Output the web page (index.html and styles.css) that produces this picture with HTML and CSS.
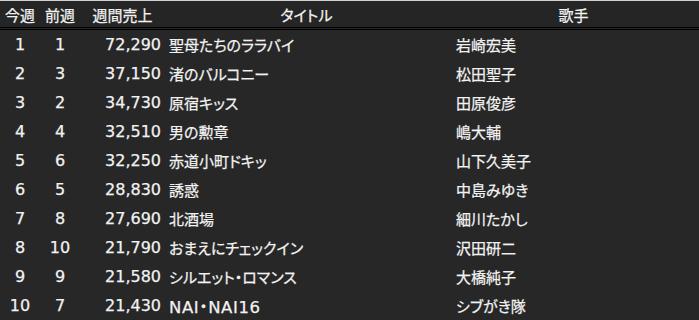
FILE: index.html
```html
<!DOCTYPE html>
<html lang="ja">
<head>
<meta charset="utf-8">
<link rel="stylesheet" href="styles.css">
</head>
<body>
<table class="chart">
  <colgroup>
    <col class="c-now"><col class="c-prev"><col class="c-sales"><col class="c-title"><col class="c-artist">
  </colgroup>
  <thead>
    <tr><th>今週</th><th>前週</th><th>週間売上</th><th>タイトル</th><th>歌手</th></tr>
  </thead>
  <tbody>
    <tr><td class="num">1</td><td class="num">1</td><td class="sales">72,290</td><td class="txt">聖母たちのララバイ</td><td class="txt artist">岩崎宏美</td></tr>
    <tr><td class="num">2</td><td class="num">3</td><td class="sales">37,150</td><td class="txt">渚のバルコニー</td><td class="txt artist">松田聖子</td></tr>
    <tr><td class="num">3</td><td class="num">2</td><td class="sales">34,730</td><td class="txt">原宿キッス</td><td class="txt artist">田原俊彦</td></tr>
    <tr><td class="num">4</td><td class="num">4</td><td class="sales">32,510</td><td class="txt">男の勲章</td><td class="txt artist">嶋大輔</td></tr>
    <tr><td class="num">5</td><td class="num">6</td><td class="sales">32,250</td><td class="txt">赤道小町ドキッ</td><td class="txt artist">山下久美子</td></tr>
    <tr><td class="num">6</td><td class="num">5</td><td class="sales">28,830</td><td class="txt">誘惑</td><td class="txt artist">中島みゆき</td></tr>
    <tr><td class="num">7</td><td class="num">8</td><td class="sales">27,690</td><td class="txt">北酒場</td><td class="txt artist">細川たかし</td></tr>
    <tr><td class="num">8</td><td class="num">10</td><td class="sales">21,790</td><td class="txt">おまえにチェックイン</td><td class="txt artist">沢田研二</td></tr>
    <tr><td class="num">9</td><td class="num">9</td><td class="sales">21,580</td><td class="txt">シルエット・ロマンス</td><td class="txt artist">大橋純子</td></tr>
    <tr><td class="num">10</td><td class="num">7</td><td class="sales">21,430</td><td class="txt"><span class="latin">NAI・NAI16</span></td><td class="txt artist">シブがき隊</td></tr>
  </tbody>
</table>
</body>
</html>
```

FILE: styles.css
```css
html, body {
  margin: 0;
  padding: 0;
  background: #272727;
}
body {
  border-top: 1px solid #d2d2d2;
  color: #f2f2f2;
  font-family: "DejaVu Sans", "Noto Sans CJK JP", sans-serif;
  font-size: 15px;
  font-feature-settings: "palt" 1;
  -webkit-text-stroke: 0.25px #f2f2f2;
}
.chart {
  width: 699px;
  border-collapse: collapse;
  table-layout: fixed;
}
.c-now { width: 40px; }
.c-prev { width: 40px; }
.c-sales { width: 85px; }
.c-title { width: 283px; }
.c-artist { width: 251px; }

.chart th {
  height: 26px;
  padding: 0;
  font-weight: normal;
  text-align: center;
  border-bottom: 3px double #000;
  background: #252525;
  white-space: nowrap;
}
.chart td {
  height: 29px;
  padding: 0;
  white-space: nowrap;
}
.num {
  text-align: center;
  font-size: 16px;
}
.sales {
  text-align: right;
  padding-right: 4px !important;
  font-size: 16px;
}
.txt {
  text-align: left;
  padding-left: 4px !important;
}
.artist {
  padding-left: 8px !important;
}
.latin {
  font-size: 16.5px;
  letter-spacing: 0.6px;
}
```
